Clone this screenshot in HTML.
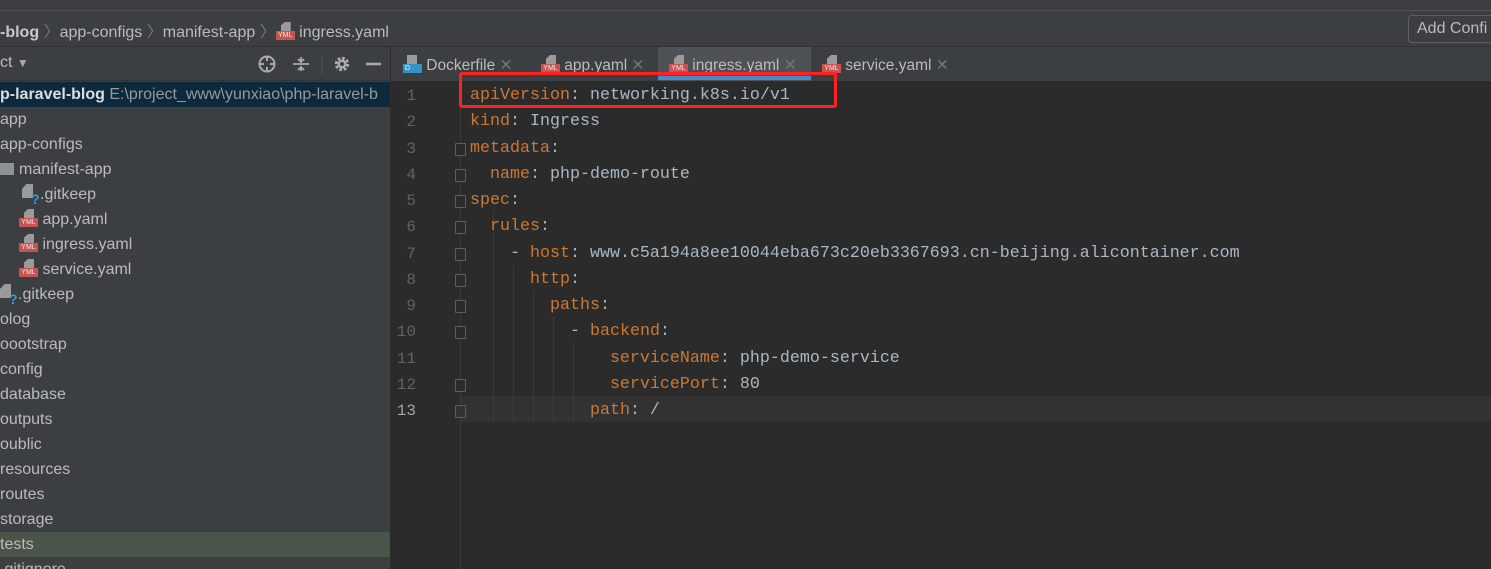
<!DOCTYPE html>
<html><head><meta charset="utf-8"><style>
*{margin:0;padding:0;box-sizing:border-box}
html,body{width:1491px;height:569px;overflow:hidden}
body{background:#3c3f41;font-family:"Liberation Sans",sans-serif;color:#bbbbbb;position:relative}
.abs{position:absolute}
.ui{font-size:15.5px;white-space:nowrap}
.mono{position:absolute;left:470px;font-family:"Liberation Mono",monospace;font-size:16.67px;white-space:pre;line-height:20px}
.k{color:#cc7832}.v{color:#a9b7c6}
.yml{display:inline-block;width:19px;height:18px;position:relative;vertical-align:-3px}
.yml:before{content:"";position:absolute;left:5px;top:0;width:10px;height:9px;background:#9a9a9a;clip-path:polygon(40% 0,100% 0,100% 100%,0 100%,0 40%)}
.yml:after{content:"YML";position:absolute;left:0;top:9px;width:19px;height:9px;background:#c75450;color:#eee;font-size:7px;line-height:9px;text-align:center;font-family:"Liberation Sans",sans-serif}
.gk{display:inline-block;width:20px;height:20px;position:relative;vertical-align:-4px}
.gk:before{content:"";position:absolute;left:2px;top:1px;width:11px;height:14px;background:#9a9a9a;clip-path:polygon(40% 0,100% 0,100% 100%,0 100%,0 35%)}
.gk:after{content:"?";position:absolute;left:11px;top:4px;color:#3c98d6;font-weight:bold;font-size:14px}
.tree div{position:absolute;height:25px;line-height:25px;font-size:16px;white-space:nowrap}
.ln{position:absolute;width:26px;text-align:right;left:390px;font-family:"Liberation Mono",monospace;font-size:16px;color:#606366;line-height:20px}
.fold{position:absolute;left:455px;width:11px;height:13px;border:1px solid #5d5d5d;border-radius:1px;background:#2b2b2b}
.guide{position:absolute;width:1px;background:#3b3b3b}
</style></head><body>
<div class="abs" style="left:0;top:10px;width:1491px;height:1px;background:#515151"></div>
<div class="abs ui" style="left:0;top:18px;font-size:16px"><b style="color:#c8c8c8">-blog</b> <span style="color:#777">〉</span>app-configs <span style="color:#777">〉</span>manifest-app <span style="color:#777">〉</span><span class="yml"></span> ingress.yaml</div>
<div class="abs" style="left:1408px;top:15px;width:100px;height:28px;border:1px solid #5e6060;border-radius:4px"></div>
<div class="abs ui" style="left:1417px;top:20px;font-size:16px;color:#bbb">Add Confi</div>
<div class="abs" style="left:0;top:46px;width:1491px;height:1px;background:#323232"></div>
<div class="abs ui" style="left:0;top:54px;font-size:16px">ct <span style="font-size:12px;color:#aaa">▼</span></div>
<svg class="abs" style="left:256px;top:54px" width="125" height="20" viewBox="0 0 125 20">
<circle cx="11" cy="10" r="7.5" fill="none" stroke="#aaa" stroke-width="2"/><path d="M11 2v5M11 13v5M3 10h5M14 10h5" stroke="#aaa" stroke-width="2"/>
<path d="M37 10h16M45 3v4M42 5l3 3 3-3M42 16l3-3 3 3M45 13v4" stroke="#aaa" stroke-width="1.8" fill="none"/>
<line x1="66" y1="2" x2="66" y2="20" stroke="#555"/>
<circle cx="86" cy="10" r="5.5" fill="none" stroke="#aaa" stroke-width="3.5" stroke-dasharray="2.6 1.7"/><circle cx="86" cy="10" r="4.5" fill="#aaa"/><circle cx="86" cy="10" r="2" fill="#3c3f41"/>
<path d="M110 10h15" stroke="#aaa" stroke-width="2.5"/>
</svg>
<div class="abs" style="left:0;top:80px;width:390px;height:1px;background:#323232"></div>
<div class="tree">
<div style="left:0;top:82px;width:390px;background:#0d293e;color:#ddd;font-weight:bold">p-laravel-blog <span style="font-weight:normal;color:#999">E:\project_www\yunxiao\php-laravel-b</span></div>
<div style="left:0;top:107px">app</div>
<div style="left:0;top:132px">app-configs</div>
<div style="left:0;top:157px"><span style="display:inline-block;width:14px;height:12px;background:#8c9297;vertical-align:-1px;margin-right:5px"></span>manifest-app</div>
<div style="left:20px;top:182px"><span class="gk"></span>.gitkeep</div>
<div style="left:19px;top:207px"><span class="yml"></span> app.yaml</div>
<div style="left:19px;top:232px"><span class="yml"></span> ingress.yaml</div>
<div style="left:19px;top:257px"><span class="yml"></span> service.yaml</div>
<div style="left:-2px;top:282px"><span class="gk"></span>.gitkeep</div>
<div style="left:0;top:307px">olog</div>
<div style="left:0;top:332px">oootstrap</div>
<div style="left:0;top:357px">config</div>
<div style="left:0;top:382px">database</div>
<div style="left:0;top:407px">outputs</div>
<div style="left:0;top:432px">oublic</div>
<div style="left:0;top:457px">resources</div>
<div style="left:0;top:482px">routes</div>
<div style="left:0;top:507px">storage</div>
<div style="left:0;top:532px;width:390px;background:#4b5449">tests</div>
<div style="left:0;top:557px">.gitignore</div>
</div>
<div class="abs" style="left:390px;top:46px;width:1px;height:523px;background:#2b2b2b"></div>
<div class="abs" style="left:658px;top:47px;width:153px;height:34px;background:#4e5254"></div>
<div class="abs" style="left:658px;top:76px;width:153px;height:4px;background:#4a88c7"></div>
<div class="abs ui" style="left:403px;top:55px"><span style="display:inline-block;width:19px;height:18px;vertical-align:-3px;position:relative"><span style="position:absolute;left:4px;top:0;width:10px;height:9px;background:#9a9a9a"></span><span style="position:absolute;left:0;top:9px;width:19px;height:9px;background:#3592c4;font-size:7px;color:#fff;line-height:9px;padding-left:2px">D</span></span> Dockerfile <span style="color:#777">✕</span></div>
<div class="abs ui" style="left:541px;top:55px"><span class="yml"></span> app.yaml <span style="color:#777">✕</span></div>
<div class="abs ui" style="left:669px;top:55px"><span class="yml"></span> ingress.yaml <span style="color:#777">✕</span></div>
<div class="abs ui" style="left:822px;top:55px"><span class="yml"></span> service.yaml <span style="color:#777">✕</span></div>
<div class="abs" style="left:391px;top:81px;width:1100px;height:488px;background:#2b2b2b"></div>
<div class="abs" style="left:461px;top:396px;width:1030px;height:26px;background:#323232"></div>
<div class="abs" style="left:460px;top:81px;width:1px;height:488px;background:#3a3a3a"></div>
<div class="guide" style="left:493px;top:212px;height:210px"></div>
<div class="guide" style="left:513px;top:265px;height:157px"></div>
<div class="guide" style="left:533px;top:291px;height:131px"></div>
<div class="guide" style="left:553px;top:317px;height:105px"></div>
<div class="guide" style="left:573px;top:343px;height:79px"></div>

<div style="position:absolute;left:0;top:2px;width:1491px;height:500px">
<div class="ln" style="top:84px">1</div><div class="mono" style="top:84px"><span class="k">apiVersion</span><span class="v">: networking.k8s.io/v1</span></div>
<div class="ln" style="top:110px">2</div><div class="mono" style="top:110px"><span class="k">kind</span><span class="v">: Ingress</span></div>
<div class="ln" style="top:137px">3</div><div class="mono" style="top:137px"><span class="k">metadata</span><span class="v">:</span></div><div class="fold" style="top:141px"></div>
<div class="ln" style="top:163px">4</div><div class="mono" style="top:163px">  <span class="k">name</span><span class="v">: php-demo-route</span></div><div class="fold" style="top:167px"></div>
<div class="ln" style="top:189px">5</div><div class="mono" style="top:189px"><span class="k">spec</span><span class="v">:</span></div><div class="fold" style="top:193px"></div>
<div class="ln" style="top:215px">6</div><div class="mono" style="top:215px">  <span class="k">rules</span><span class="v">:</span></div><div class="fold" style="top:219px"></div>
<div class="ln" style="top:242px">7</div><div class="mono" style="top:242px">    <span class="v">- </span><span class="k">host</span><span class="v">: www.c5a194a8ee10044eba673c20eb3367693.cn-beijing.alicontainer.com</span></div><div class="fold" style="top:246px"></div>
<div class="ln" style="top:268px">8</div><div class="mono" style="top:268px">      <span class="k">http</span><span class="v">:</span></div><div class="fold" style="top:272px"></div>
<div class="ln" style="top:294px">9</div><div class="mono" style="top:294px">        <span class="k">paths</span><span class="v">:</span></div><div class="fold" style="top:298px"></div>
<div class="ln" style="top:320px">10</div><div class="mono" style="top:320px">          <span class="v">- </span><span class="k">backend</span><span class="v">:</span></div><div class="fold" style="top:324px"></div>
<div class="ln" style="top:347px">11</div><div class="mono" style="top:347px">              <span class="k">serviceName</span><span class="v">: php-demo-service</span></div>
<div class="ln" style="top:373px">12</div><div class="mono" style="top:373px">              <span class="k">servicePort</span><span class="v">: 80</span></div><div class="fold" style="top:377px"></div>
<div class="ln" style="top:399px;color:#a4a3a3">13</div><div class="mono" style="top:399px">            <span class="k">path</span><span class="v">: /</span></div><div class="fold" style="top:403px;background:#323232"></div>
</div>

<div class="abs" style="left:459px;top:72px;width:378px;height:36px;border:3px solid #f22;border-radius:3px"></div>
</body></html>
